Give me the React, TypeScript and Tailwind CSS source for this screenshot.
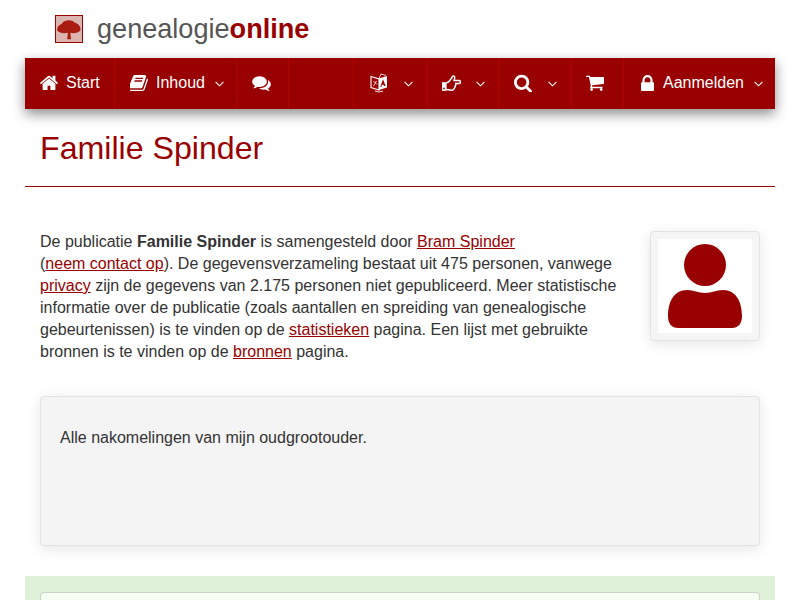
const D = {
  home: "M1472 992v480q0 26-19 45t-45 19h-384v-384h-256v384h-384q-26 0-45-19t-19-45v-480q0-1 .5-3t.5-3l575-474 575 474q1 2 1 6zm223-69l-62 74q-8 9-21 11h-3q-13 0-21-7l-692-577-692 577q-12 8-24 7-13-2-21-11l-62-74q-8-10-7-23.5t11-21.5l719-599q32-26 76-26t76 26l244 204v-195q0-14 9-23t23-9h192q14 0 23 9t9 23v408l219 182q10 8 11 21.5t-7 23.5z",
  book: "M1639 478q40 57 18 129l-275 906q-19 64-76.5 107.5t-122.5 43.5h-923q-77 0-148.5-53.5t-99.5-131.5q-24-67-2-127 0-4 3-27t4-37q1-8-3-21.5t-3-19.5q2-11 8-21t16.5-23.5 16.5-23.5q23-38 45-91.5t30-91.5q3-10 .5-30t-.5-28q3-11 17-28t17-23q21-36 42-92t25-90q1-9-2.5-32t.5-28q4-13 22-30.5t22-22.5q19-26 42.5-84.5t27.5-96.5q1-8-3-25.5t-2-26.5q2-8 9-18t18-23 17-21q8-12 16.5-30.5t15-35 16-36 19.5-32 26.5-23.5 36-11.5 47.5 5.5l-1 3q38-9 51-9h761q74 0 114 56t18 130l-274 906q-36 119-71.5 153.5t-128.5 34.5h-869q-27 0-38 15-11 16-1 43 24 70 144 70h923q29 0 56-15.5t35-41.5l300-987q7-22 5-57 38 15 59 43zm-1064 2q-4 13 2 22.5t20 9.5h608q13 0 25.5-9.5t16.5-22.5l21-64q4-13-2-22.5t-20-9.5h-608q-13 0-25.5 9.5t-16.5 22.5zm-83 256q-4 13 2 22.5t20 9.5h608q13 0 25.5-9.5t16.5-22.5l21-64q4-13-2-22.5t-20-9.5h-608q-13 0-25.5 9.5t-16.5 22.5z",
  comments: "M1408 768q0 139-94 257t-256.5 186.5-353.5 68.5q-86 0-176-16-124 88-278 128-36 9-86 16h-3q-11 0-20.5-8t-11.5-21q-1-3-1-6.5t.5-6.5 2-6l2.5-5 3.5-5.5 4-5 4.5-5 4-4.5q5-6 23-25t26-29.5 22.5-29 25-38.5 20.5-44q-124-72-195-177t-71-224q0-139 94-257t256.5-186.5 353.5-68.5 353.5 68.5 256.5 186.5 94 257zm384 256q0 120-71 224.5t-195 176.5q10 24 20.5 44t25 38.5 22.5 29 26 29.5 23 25q1 1 4 4.5t4.5 5 4 5 3.5 5.5l2.5 5 2 6 .5 6.5-1 6.5q-3 14-13 22t-22 7q-50-7-86-16-154-40-278-128-90 16-176 16-271 0-472-132 58 4 88 4 161 0 309-45t264-129q125-92 192-212t67-254q0-77-23-152 129 71 204 178t75 230z",
  search: "M1216 832q0-185-131.5-316.5t-316.5-131.5-316.5 131.5-131.5 316.5 131.5 316.5 316.5 131.5 316.5-131.5 131.5-316.5zm512 832q0 52-38 90t-90 38q-54 0-90-38l-343-342q-179 124-399 124-143 0-273.5-55.5t-225-150-150-225-55.5-273.5 55.5-273.5 150-225 225-150 273.5-55.5 273.5 55.5 225 150 150 225 55.5 273.5q0 220-124 399l343 343q37 37 37 90z",
  cart: "M704 1536q0 52-38 90t-90 38-90-38-38-90 38-90 90-38 90 38 38 90zm896 0q0 52-38 90t-90 38-90-38-38-90 38-90 90-38 90 38 38 90zm128-1088v512q0 24-16.5 42.5t-40.5 21.5l-1044 122q13 60 13 70 0 16-24 64h920q26 0 45 19t19 45-19 45-45 19h-1024q-26 0-45-19t-19-45q0-11 8-31.5t16-36 21.5-40 15.5-29.5l-177-823h-204q-26 0-45-19t-19-45 19-45 45-19h256q16 0 28.5 6.5t19.5 15.5 13 24.5 8 26 5.5 29.5 4.5 26h1201q26 0 45 19t19 45z",
  lock: "M640 768h512v-192q0-106-75-181t-181-75-181 75-75 181v192zm832 96v576q0 40-28 68t-68 28h-960q-40 0-68-28t-28-68v-576q0-40 28-68t68-28h32v-192q0-184 132-316t316-132 316 132 132 316v192h32q40 0 68 28t28 68z",
};

function Glyph({ d, vb, className, stretch }: { d: string; vb: string; className: string; stretch?: boolean }) {
  return (
    <svg viewBox={vb} className={`${className} shrink-0`} fill="white" preserveAspectRatio={stretch ? "none" : undefined}>
      <path d={d} />
    </svg>
  );
}

function Chevron() {
  return (
    <svg viewBox="0 0 9 6" className="w-[9px] h-[6px] mt-[3px] shrink-0" fill="none" stroke="white" strokeWidth="1.1">
      <path d="M0.6 0.8 L4.5 4.8 L8.4 0.8" />
    </svg>
  );
}

function Hand() {
  return (
    <svg viewBox="0 0 19 16" className="w-[19px] h-[16px] mr-[15px] shrink-0">
      <path d="M0 7.2 H4.6 V15.8 H0 Z" fill="white" />
      <circle cx="2" cy="13.4" r="0.9" fill="#990000" />
      <path
        d="M4.5 8 C6.5 7.5 8 5.5 9.4 3.4 C10 2.3 10.4 1 11.3 1 C12.6 1 13 2.2 12.6 3.4 L12 5.4 H17 C17.9 5.4 18.4 6.1 18.4 6.9 C18.4 7.8 17.9 8.5 17 8.5 H13.8 C14 9.6 13.6 10.5 13.2 11.2 C13 12.4 12.6 13.2 12 13.8 C11.6 14.7 10.8 15.2 9.6 15.2 C7.8 15.2 6 14.6 4.5 14.4"
        fill="none"
        stroke="white"
        strokeWidth="1.5"
      />
    </svg>
  );
}

function Translate() {
  return (
    <svg viewBox="0 0 18 20" className="w-[18px] h-[20px] shrink-0">
      <path d="M1 3.5 L9 6 V17 L1 14.5 Z" fill="none" stroke="white" strokeWidth="1.1" />
      <path d="M9 5.5 L17 3 V14.5 L9 17 Z" fill="white" />
      <path d="M9 5.5 L11 1 L16 2.5" fill="none" stroke="white" strokeWidth="0.8" />
      <path d="M13 6.2 L15.6 13 H14 L13.6 11.7 H11.9 L11.4 13.7 L10.2 14 Z" fill="#990000" />
      <path d="M3.5 8 L7 11.5 M6.5 8 L3.5 13" stroke="white" strokeWidth="0.8" fill="none" />
      <path d="M5 18 Q9 20 13 18" stroke="white" strokeWidth="0.9" fill="none" />
    </svg>
  );
}

function Item({ w, children, last }: { w: string; children: React.ReactNode; last?: boolean }) {
  return (
    <div className={`${w} h-full pb-[2px] flex items-center text-white ${last ? "" : "border-r border-[#b30000]"}`}>
      {children}
    </div>
  );
}

export default function App() {
  const link = "text-[#990000] underline";
  return (
    <div className="h-[600px] overflow-hidden bg-white text-[#333333] text-[16px] leading-[22px]" style={{ fontFamily: '"Liberation Sans", Arial, sans-serif' }}>
      <div className="h-[58px] flex items-center pl-[55px] pb-[1px]">
        <svg viewBox="0 0 28 28" className="w-[28px] h-[28px] mr-[14px] border border-[#990000] bg-[#dcb4b0] box-border">
          <path d="M12 25 L12.8 18 C9 19 3.5 18.5 1.5 16 C0.5 12.5 3 9.5 6 8.5 C8.5 4 17 3.5 20 7 C24 8 27.5 12 26 16 C23.5 18.5 18.5 19 15.5 18 L16.2 25 Z" fill="#a81c12" />
        </svg>
        <div className="text-[27.1px] leading-[32px] text-[#555555]">genealogie<span className="font-bold text-[#990000]">online</span></div>
      </div>

      <div className="mx-[25px] h-[51px] bg-[#990000] flex shadow-[0_5px_12px_rgba(0,0,0,0.45)]">
        <Item w="w-[90px] pl-[15px]">
          <Glyph d={D.home} vb="90 190 1612 1350" className="w-[18px] h-[15px] mr-[8px]" />
          <span>Start</span>
        </Item>
        <Item w="w-[122px] pl-[15px]">
          <Glyph d={D.book} vb="128 128 1540 1540" className="w-[18px] h-[16px] mr-[8px]" stretch />
          <span className="mr-[10px]">Inhoud</span>
          <Chevron />
        </Item>
        <Item w="w-[52px] pl-[15px]">
          <Glyph d={D.comments} vb="0 128 1792 1536" className="w-[19px] h-[16px]" />
        </Item>
        <Item w="w-[65px]"><span /></Item>
        <Item w="w-[74px] pl-[16px]">
          <Translate />
          <span className="w-[16px]" />
          <Chevron />
        </Item>
        <Item w="w-[71px] pl-[14px]">
          <Hand />
          <Chevron />
        </Item>
        <Item w="w-[73px] pl-[15px]">
          <Glyph d={D.search} vb="64 64 1664 1664" className="w-[18px] h-[18px] mr-[16px]" />
          <Chevron />
        </Item>
        <Item w="w-[52px] pl-[14px]">
          <Glyph d={D.cart} vb="64 192 1664 1472" className="w-[18px] h-[16px]" />
        </Item>
        <Item w="w-[151px] pl-[17px]" last>
          <Glyph d={D.lock} vb="320 128 1152 1408" className="w-[13px] h-[16px] mr-[9px]" />
          <span className="mr-[10px]">Aanmelden</span>
          <Chevron />
        </Item>
      </div>

      <div className="mx-[25px] h-[78px] border-b border-[#990000] px-[15px] pt-[22px]">
        <h1 className="text-[32.15px] leading-[35px] text-[#990000]">Familie Spinder</h1>
      </div>

      <div className="mx-[40px] mt-[44px] flex justify-between">
        <p className="w-[585px]">
          De publicatie <b>Familie Spinder</b> is samengesteld door <a className={link}>Bram Spinder</a><br />
          (<a className={link}>neem contact op</a>). De gegevensverzameling bestaat uit 475 personen, vanwege <a className={link}>privacy</a> zijn de gegevens van 2.175 personen niet gepubliceerd. Meer statistische informatie over de publicatie (zoals aantallen en spreiding van genealogische gebeurtenissen) is te vinden op de <a className={link}>statistieken</a> pagina. Een lijst met gebruikte bronnen is te vinden op de <a className={link}>bronnen</a> pagina.
        </p>
        <div className="w-[110px] h-[110px] bg-[#f5f5f5] border border-[#e3e3e3] rounded-[4px] p-[7px] shadow-[0_3px_14px_rgba(0,0,0,0.1)]">
          <div className="w-[94px] h-[94px] bg-white">
            <svg viewBox="0 0 94 94" className="w-[94px] h-[94px]">
              <circle cx="47" cy="26" r="21" fill="#990000" />
              <path d="M29 51 C36 51 40 54 47 54 C54 54 58 51 65 51 C78 51 84 63 84 77 C84 85 80 89 74 89 L20 89 C14 89 10 85 10 77 C10 63 16 51 29 51 Z" fill="#990000" />
            </svg>
          </div>
        </div>
      </div>

      <div className="mx-[40px] mt-[33px] h-[150px] bg-[#f4f4f4] border border-[#e3e3e3] rounded-[4px] px-[19px] pt-[30px] shadow-[0_3px_14px_rgba(0,0,0,0.1)]">
        Alle nakomelingen van mijn oudgrootouder.
      </div>

      <div className="mx-[25px] mt-[30px] h-[60px] bg-[#dff0d8] px-[15px] pt-[16px]">
        <div className="h-[100px] bg-[#f6fdf3] border border-[#c9d3c3] rounded-[4px]" />
      </div>
    </div>
  );
}
